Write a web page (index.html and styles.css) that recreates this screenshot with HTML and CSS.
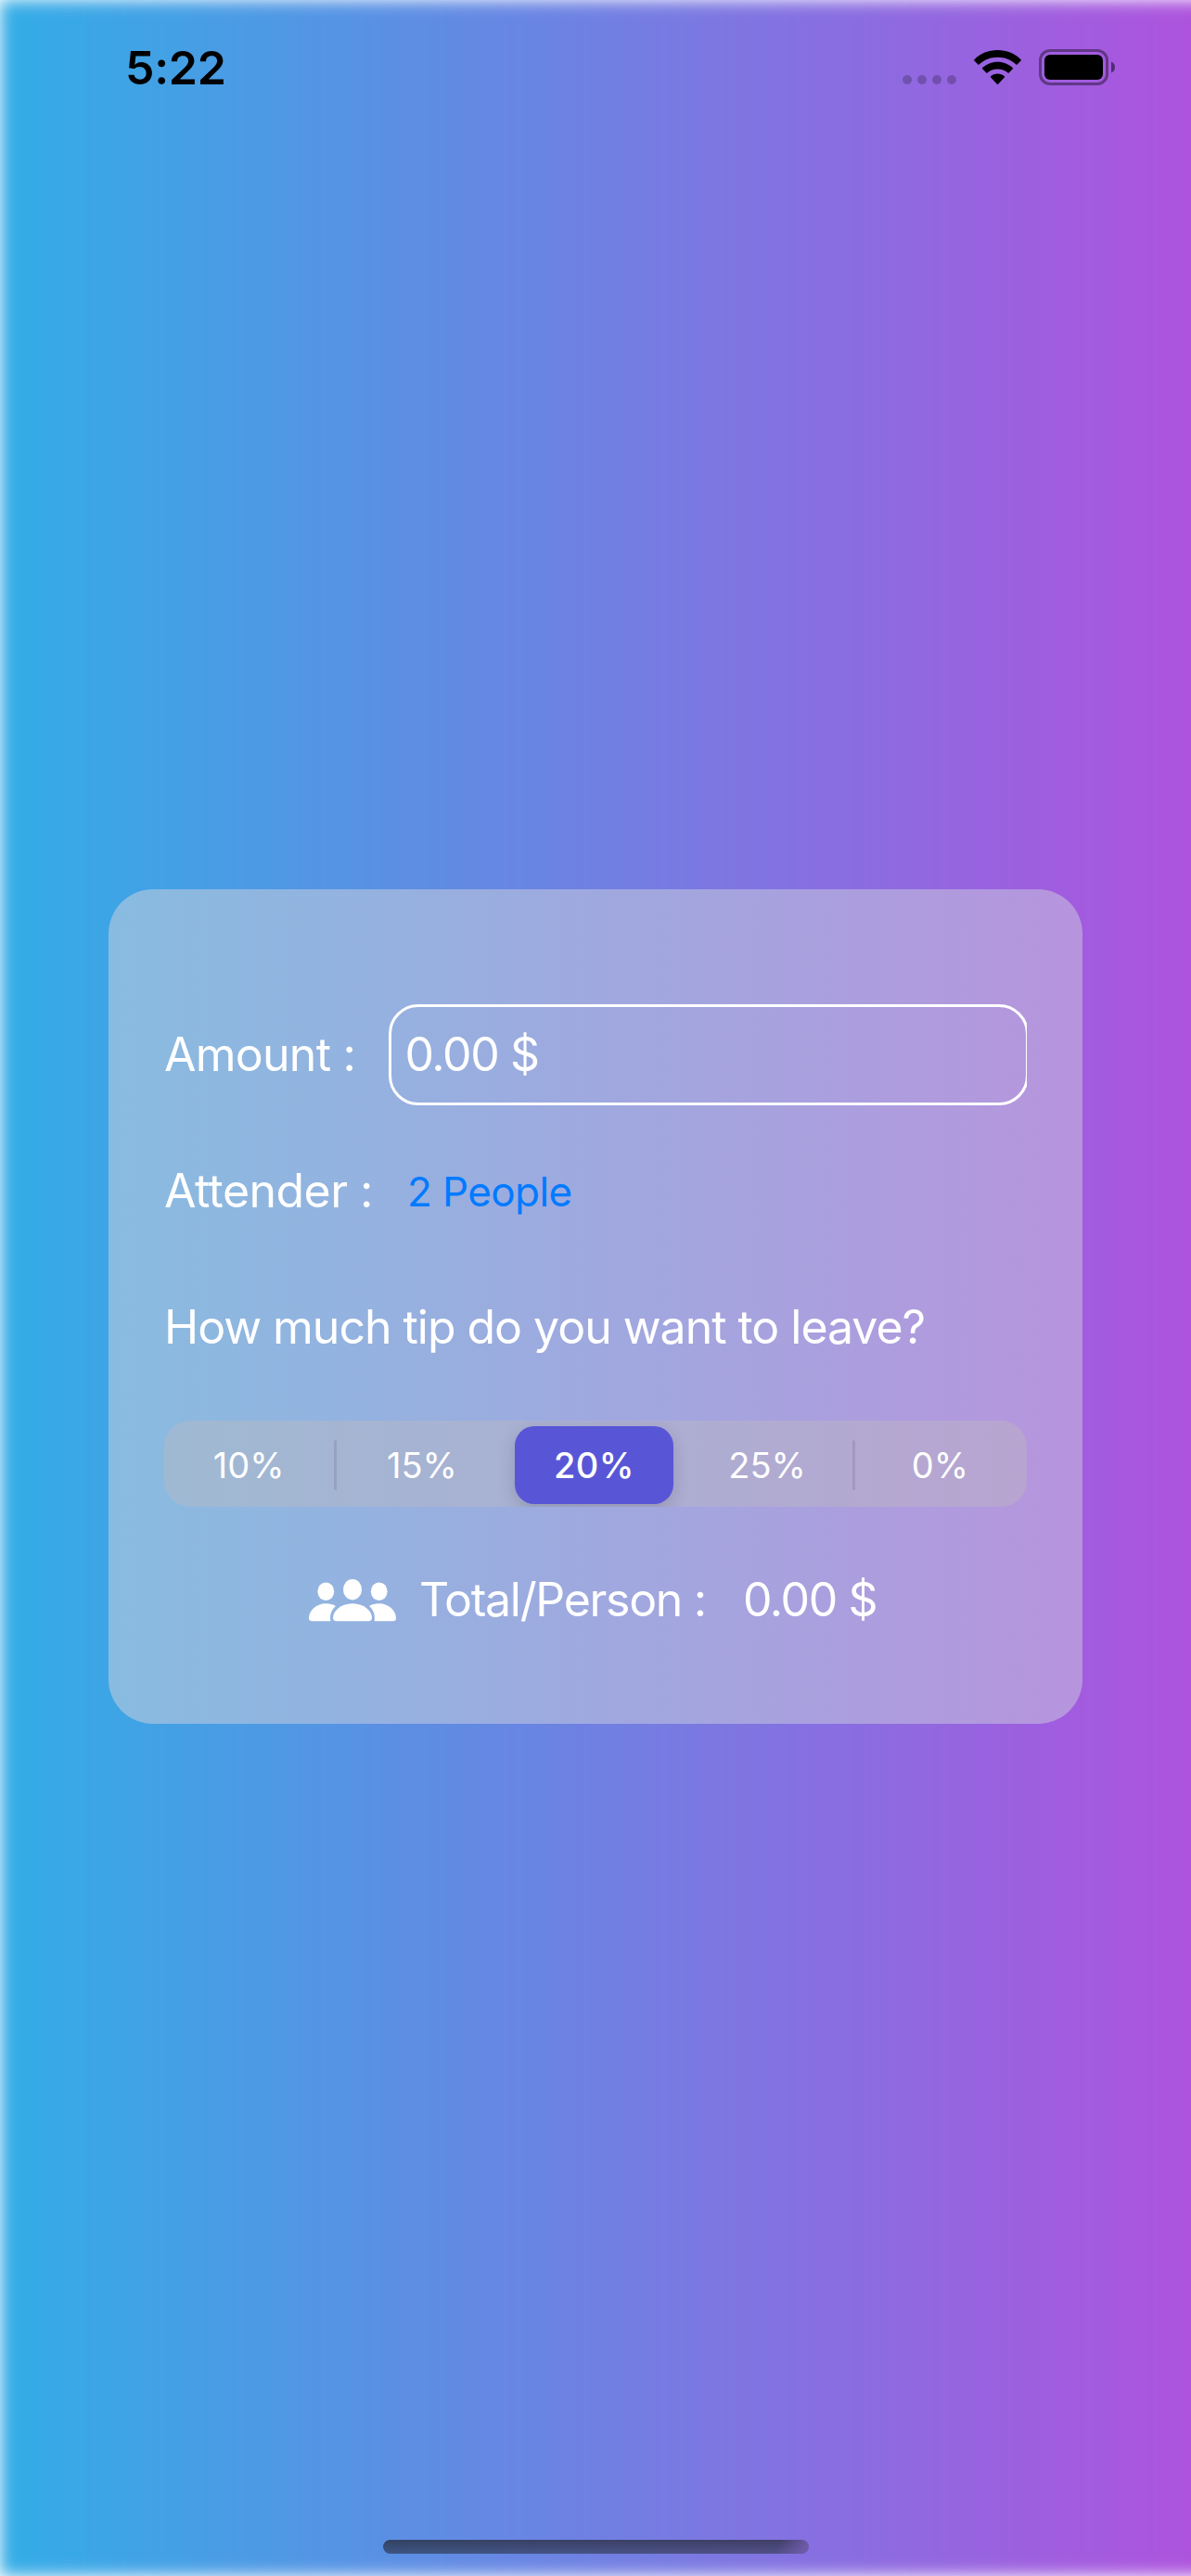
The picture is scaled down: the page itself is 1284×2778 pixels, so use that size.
FILE: index.html
```html
<!DOCTYPE html>
<html lang="en">
<head>
<meta charset="utf-8">
<title>Tip Calculator</title>
<link rel="stylesheet" href="styles.css">
</head>
<body>
<div class="screen">
  <div class="backdrop"></div>
  <header class="status">
    <span class="time">5:22</span>
    <div class="indicators">
      <svg class="signal" width="58" height="10" viewBox="0 0 58 10"><circle cx="5" cy="5" r="5"/><circle cx="21" cy="5" r="5"/><circle cx="37" cy="5" r="5"/><circle cx="53" cy="5" r="5"/></svg>
      <svg class="wifi" width="51" height="38" viewBox="0 0 51 38">
        <path d="M25.500 0C35 0 44 3.600 50.600 10.200Q51.200 10.900 50.600 11.500L46.600 15.500Q46 16 45.400 15.500C40 10.400 33 7.700 25.500 7.700S11 10.400 5.600 15.500Q5 16 4.400 15.500L.4 11.500Q-.2 10.900 .4 10.200C7 3.600 16 0 25.500 0Z"/>
        <path d="M25.500 12.700C31.800 12.700 37.500 15.200 41.800 19.100Q42.400 19.700 41.800 20.300L37.700 24.400Q37.200 24.900 36.600 24.400C33.600 21.800 29.700 20.400 25.500 20.400S17.400 21.800 14.400 24.400Q13.800 24.900 13.300 24.400L9.200 20.300Q8.600 19.700 9.200 19.100C13.500 15.200 19.200 12.700 25.500 12.700Z"/>
        <path d="M25.500 25.600C28.300 25.600 30.900 26.600 32.900 28.300Q33.500 28.900 32.900 29.500L26.100 36.700Q25.500 37.300 24.900 36.700L18.100 29.500Q17.500 28.900 18.100 28.300C20.100 26.600 22.700 25.600 25.500 25.600Z"/>
      </svg>
      <svg class="battery" width="82" height="39" viewBox="0 0 82 39">
        <rect x="1.500" y="1.500" width="72" height="36" rx="10.500" fill="none" stroke="#000" stroke-opacity=".4" stroke-width="3"/>
        <rect x="6" y="6" width="63" height="27" rx="6"/>
        <path d="M78 13.500C80.500 14.500 82 16.800 82 19.500S80.500 24.500 78 25.500Z" fill-opacity=".5"/>
      </svg>
    </div>
  </header>

  <main class="card">
    <div class="row amount">
      <label class="label l-amount">Amount :</label>
      <div class="clip"><div class="field"><span class="money">0.00 $</span></div></div>
    </div>
    <div class="row attender">
      <span class="label l-attender">Attender :</span>
      <span class="picker">2 People</span>
    </div>
    <div class="row question">How much tip do you want to leave?</div>
    <div class="segments">
      <span class="seg">10%</span>
      <span class="divider"></span>
      <span class="seg">15%</span>
      <span class="divider off"></span>
      <span class="seg selected">20%</span>
      <span class="divider off"></span>
      <span class="seg">25%</span>
      <span class="divider"></span>
      <span class="seg">0%</span>
    </div>
    <div class="row total">
      <svg class="people" width="94" height="46" viewBox="0 0 94 46">
        <ellipse cx="18.300" cy="13.200" rx="8.900" ry="9.800"/>
        <ellipse cx="75.700" cy="13.200" rx="8.900" ry="9.800"/>
        <ellipse cx="47" cy="11.200" rx="10" ry="11.200"/>
        <path d="M18.300 26.300C22.500 26.300 26 27.200 29 28.900C24.500 33 22.200 38 23.400 45.200H3.500Q0 45.200 0 42C0 34.500 7.500 26.300 18.300 26.300Z"/>
        <path d="M75.700 26.300C71.500 26.300 68 27.200 65 28.900C69.500 33 71.800 38 70.600 45.200H90.500Q94 45.200 94 42C94 34.500 86.500 26.300 75.700 26.300Z"/>
        <path d="M47 26.300C60 26.300 68 35 68 41.500Q68 45.200 64.300 45.200H29.700Q26 45.200 26 41.500C26 35 34 26.300 47 26.300Z"/>
      </svg>
      <span class="label l-total">Total/Person :</span>
      <span class="money">0.00 $</span>
    </div>
  </main>
  <div class="home"></div>
</div>
</body>
</html>
```
FILE: styles.css
```css
* { box-sizing: border-box; }
body { margin: 0; background: #fff; font-family: Inter, "Liberation Sans", sans-serif; }
.screen {
  position: relative;
  isolation: isolate;
  width: 1284px;
  height: 2778px;
  overflow: hidden;
  display: flex;
  flex-direction: column;
  align-items: center;
}
/* runs past the right edge so that only the other three sides fade */
.backdrop {
  position: absolute;
  inset: 0 -40px 0 0;
  z-index: -1;
  background: linear-gradient(90deg, #32ade6, #af52de 1300px);
  filter: blur(9px);
}
.status {
  width: 100%;
  height: 959px;
  padding: 53px 82px 0 135px;
  display: flex;
  justify-content: space-between;
  align-items: flex-start;
}
.time { font-size: 50px; line-height: 40px; font-weight: 600; letter-spacing: -0.3px; }
.indicators { display: flex; align-items: flex-start; }
.signal { margin: 28px 19px 0 0; fill-opacity: .22; }
.wifi { margin: 1px 19px 0 0; }

.card {
  width: 1050px;
  height: 900px;
  padding: 124px 60px 0;
  border-radius: 48px;
  background: linear-gradient(90deg, rgba(199, 206, 220, .55), rgba(203, 204, 220, .51));
  color: #fff;
  font-size: 50px;
  line-height: 60px;
}
.row { display: flex; align-items: center; white-space: pre; height: 60px; }
.amount { height: 109px; }
.clip { flex: 1; height: 109px; overflow: hidden; }
.field {
  width: calc(100% + 2px);
  height: 109px;
  padding: 0 0 2px 14.500px;
  border: 3.500px solid #fff;
  border-radius: 32px;
  display: flex;
  align-items: center;
}
.money { letter-spacing: -1.4px; }
.label { flex: none; }
.l-amount { width: 242px; padding-bottom: 1px; letter-spacing: -0.75px; }
.attender { margin-top: 62px; }
.l-attender { width: 262px; letter-spacing: -0.55px; }
.picker { color: #007aff; font-size: 44px; padding-top: 1px; letter-spacing: -0.6px; }
.question { margin-top: 87px; letter-spacing: -1.03px; }

.segments {
  margin-top: 71px;
  height: 93px;
  padding: 2px 2px 0 0;
  border-radius: 28px;
  background: rgba(190, 184, 190, .4);
  display: flex;
  align-items: center;
  overflow: hidden;
  font-size: 38px;
}
.seg { flex: 1; height: 84px; line-height: 84px; text-align: center; }
.seg:first-child { text-indent: -1px; }
.selected {
  flex: 0 0 171px;
  margin: 0 6.500px 0 5.500px;
  border-radius: 21px;
  background: #5856d6;
  font-weight: 500;
  letter-spacing: 0.4px;
  box-shadow: 0 6px 18px rgba(0, 0, 0, .14);
}
.divider { flex: none; width: 3px; height: 54px; border-radius: 1.500px; background: rgba(120, 120, 150, .3); }
.off { background: none; }

.total { margin-top: 70px; padding-left: 156px; }
.people { fill: #fff; margin: 2px 26px 0 0; }
.l-total { width: 348px; margin-left: -1px; letter-spacing: -1.3px; }
.total .money { margin-left: 1px; }

.home {
  margin-top: 880px;
  width: 459px;
  height: 15px;
  border-radius: 7.500px;
  background:
    linear-gradient(115deg, rgba(112, 92, 172, 0) 92%, rgba(112, 92, 172, .95) 99%),
    linear-gradient(180deg, rgba(40, 40, 60, .45), rgba(40, 40, 60, 0)),
    linear-gradient(90deg, #3c5683, #54508a);
}
```
